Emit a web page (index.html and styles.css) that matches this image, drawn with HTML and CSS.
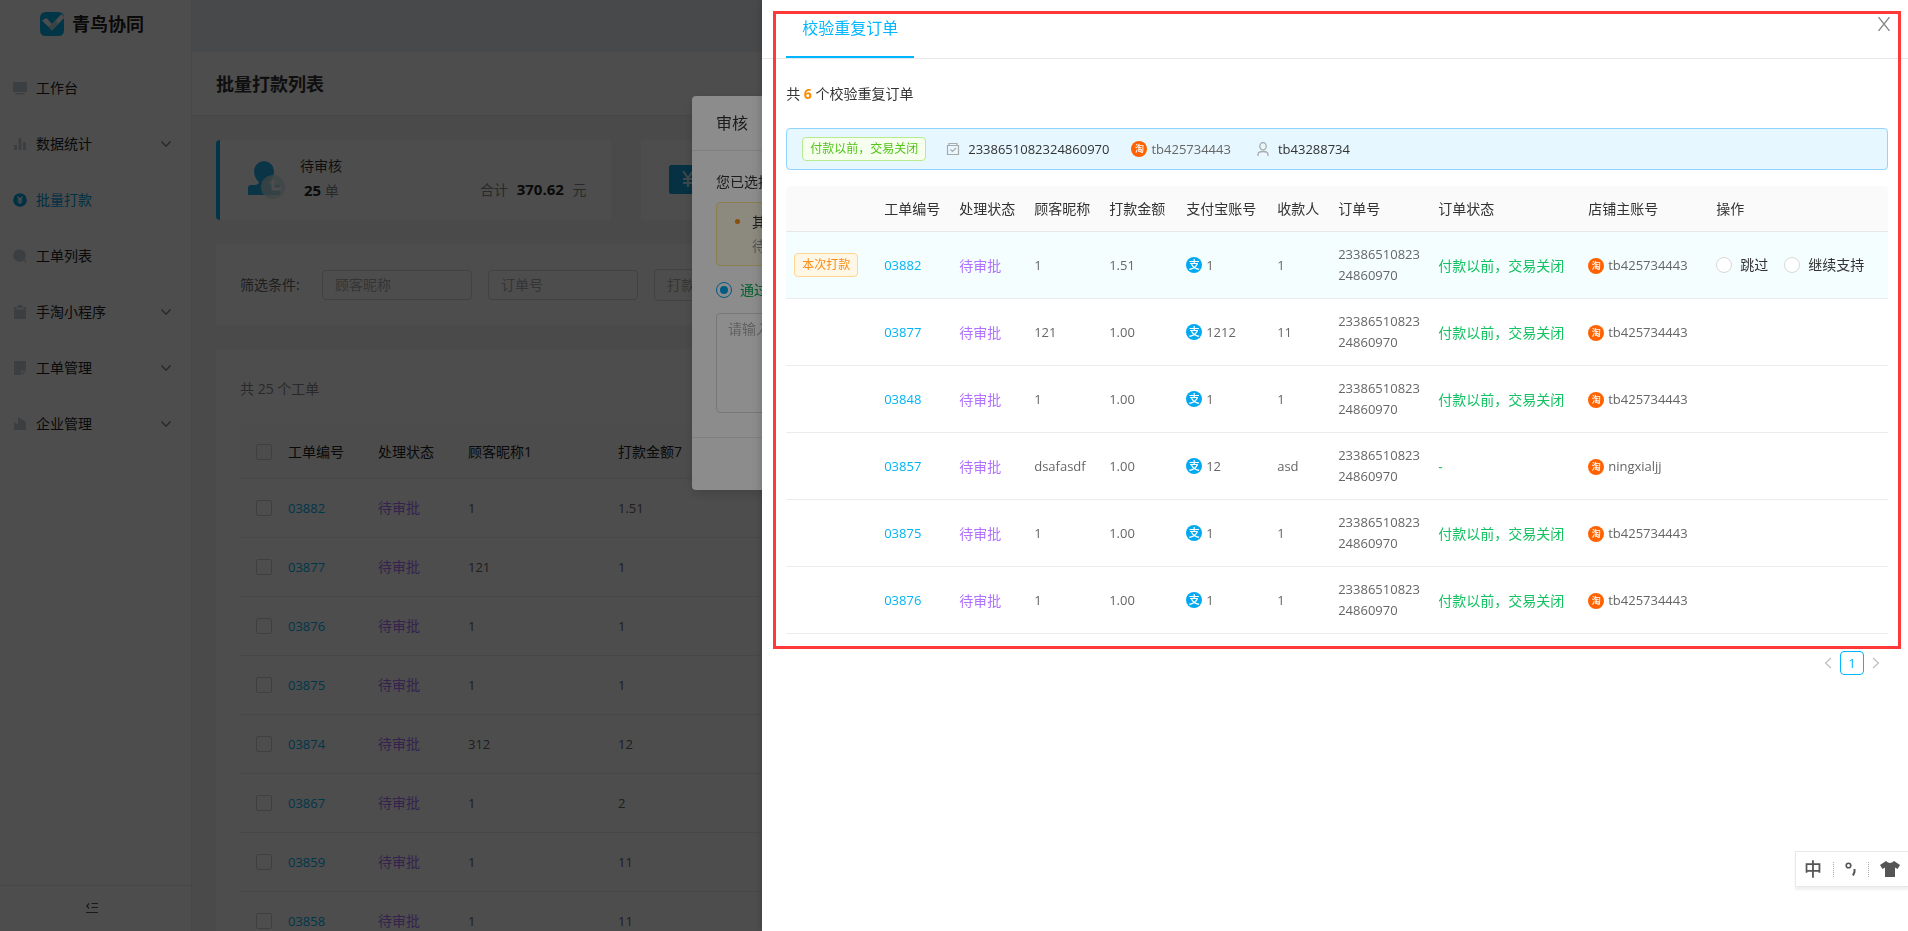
FILE: index.html
```html
<!DOCTYPE html>
<html lang="zh-CN">
<head>
<meta charset="utf-8">
<meta name="viewport" content="width=device-width, initial-scale=1">
<title>青鸟协同</title>
<link rel="stylesheet" href="styles.css">
</head>
<body>
<svg class="sprite" aria-hidden="true">
  <symbol id="chevron" viewBox="0 0 12 12"><path d="M1.5 3.5 6 8.200l4.500-4.700" fill="none" stroke="currentColor" stroke-width="1.500"/></symbol>
  <symbol id="order" viewBox="0 0 14 14"><path d="M1.500 3.500h11v9h-11zM3 1.500h8v2H3zM4.500 7.500l2 2 3.500-3.500" fill="none" stroke="currentColor" stroke-width="1.200"/></symbol>
  <symbol id="person" viewBox="0 0 14 14"><ellipse cx="7" cy="4.200" rx="3.200" ry="3.700" fill="none" stroke="currentColor" stroke-width="1.300"/><path d="M2 14V12.500Q2 9.500 7 9.500t5 3V14" fill="none" stroke="currentColor" stroke-width="1.300"/></symbol>
</svg>

<div class="app">
  <aside class="sidebar">
    <div class="brand">
      <svg class="brand-logo" viewBox="0 0 24 24" aria-hidden="true"><path d="M6 0h12q6 0 6 6v12q0 6-6 6H6q-6 0-6-6V6q0-6 6-6z" fill="#00b4ec"/><path d="M2 8.500 6.500 6l5.500 6L21.500 2l2.500 3v1L12 18.500z" fill="#fff"/><path d="M12 12l4-4 2 4-6 6.500-4-4z" fill="#b9dfe8"/></svg>
      <span>青鸟协同</span>
    </div>
    <nav class="menu">
      <a class="menu-item" href="#"><svg class="menu-icon" viewBox="0 0 14 14"><path d="M0 1h14v10H0zM2 12h10v1.500H2z"/></svg><span>工作台</span></a>
      <a class="menu-item" href="#"><svg class="menu-icon" viewBox="0 0 14 14"><path d="M1 8h3v5H1zM5.500 1h3v12h-3zM10 5h3v8h-3z"/></svg><span>数据统计</span><svg class="menu-arrow"><use href="#chevron"/></svg></a>
      <a class="menu-item active" href="#"><svg class="menu-icon" viewBox="0 0 14 14"><circle cx="7" cy="7" r="6.800"/><path d="M4.500 3.500 7 6.500l2.500-3M4.500 7h5M4.500 9h5M7 6.500V11" fill="none" stroke="#fff" stroke-width="1.200"/></svg><span>批量打款</span></a>
      <a class="menu-item" href="#"><svg class="menu-icon" viewBox="0 0 14 14"><circle cx="6.500" cy="6.500" r="6.300"/><path d="M10 10l3.500 3.500" stroke="currentColor" stroke-width="1.500"/></svg><span>工单列表</span></a>
      <a class="menu-item" href="#"><svg class="menu-icon" viewBox="0 0 14 14"><path d="M1 2h2.500v2.500h7V2H13v12H1zM4.500 0h5v3h-5z"/></svg><span>手淘小程序</span><svg class="menu-arrow"><use href="#chevron"/></svg></a>
      <a class="menu-item" href="#"><svg class="menu-icon" viewBox="0 0 14 14"><path d="M1 0h12v9.500H8.500V14H1zM9.500 10.500H13L9.500 14z"/></svg><span>工单管理</span><svg class="menu-arrow"><use href="#chevron"/></svg></a>
      <a class="menu-item" href="#"><svg class="menu-icon" viewBox="0 0 14 14"><path d="M1 5l4 2.500V0l8 5v8H1z"/></svg><span>企业管理</span><svg class="menu-arrow"><use href="#chevron"/></svg></a>
    </nav>
    <button class="collapse" type="button" aria-label="收起菜单"><svg viewBox="0 0 12 12"><path d="M3 1.500.8 4 3 6.500M5.500 1.500H12M5.500 5.500H12M0 10.500h12" fill="none" stroke="currentColor" stroke-width="1.200"/></svg></button>
  </aside>

  <div class="page">
    <div class="topbar"></div>
    <header class="page-head"><h1>批量打款列表</h1></header>
    <main class="content">
      <section class="stats">
        <div class="stat selected">
          <svg class="stat-icon" viewBox="0 0 38 38"><path d="M0 34V27q0-3 3-3h5q3-1 3-3Q6 17 6 10 7 1 16 0q9 1 10 10 0 7-5 11 0 2 3 3h8v10z" fill="#1eaee8"/><circle cx="25" cy="26" r="12" fill="#cfe6e8" fill-opacity=".8"/><path d="M25 19v9h8" fill="none" stroke="#fff" stroke-width="3"/></svg>
          <div class="stat-text"><span>待审核</span><span class="stat-count"><b>25</b> 单</span></div>
          <div class="stat-sum">合计 <b>370.62</b> 元</div>
        </div>
        <div class="stat">
          <svg class="stat-icon" viewBox="0 0 38 38"><rect x="0" y="4" width="38" height="29" rx="2" fill="#12a3dc"/><path d="M14 10l5 7 5-7M14 18h10M14 22h10M19 17v9" fill="none" stroke="#d3ecf3" stroke-width="2"/></svg>
        </div>
        <div class="stat"></div>
        <div class="stat"></div>
      </section>
      <form class="filters">
        <span class="filters-label">筛选条件:</span>
        <input class="field" type="text" placeholder="顾客昵称" aria-label="顾客昵称">
        <input class="field" type="text" placeholder="订单号" aria-label="订单号">
        <input class="field tall" type="text" placeholder="打款" aria-label="打款">
      </form>
      <section class="list">
        <p class="list-total">共 25 个工单</p>
        <table class="list-table">
          <thead><tr><th class="c-check"><input class="check" type="checkbox" aria-label="全选"></th><th class="c-id">工单编号</th><th class="c-id">处理状态</th><th class="c-wide">顾客昵称1</th><th>打款金额7</th></tr></thead>
          <tbody>
            <tr><td class="c-check"><input class="check" type="checkbox" aria-label="03882"></td><td><a href="#">03882</a></td><td class="pending">待审批</td><td>1</td><td>1.51</td></tr>
            <tr><td class="c-check"><input class="check" type="checkbox" aria-label="03877"></td><td><a href="#">03877</a></td><td class="pending">待审批</td><td>121</td><td>1</td></tr>
            <tr><td class="c-check"><input class="check" type="checkbox" aria-label="03876"></td><td><a href="#">03876</a></td><td class="pending">待审批</td><td>1</td><td>1</td></tr>
            <tr><td class="c-check"><input class="check" type="checkbox" aria-label="03875"></td><td><a href="#">03875</a></td><td class="pending">待审批</td><td>1</td><td>1</td></tr>
            <tr><td class="c-check"><input class="check" type="checkbox" aria-label="03874"></td><td><a href="#">03874</a></td><td class="pending">待审批</td><td>312</td><td>12</td></tr>
            <tr><td class="c-check"><input class="check" type="checkbox" aria-label="03867"></td><td><a href="#">03867</a></td><td class="pending">待审批</td><td>1</td><td>2</td></tr>
            <tr><td class="c-check"><input class="check" type="checkbox" aria-label="03859"></td><td><a href="#">03859</a></td><td class="pending">待审批</td><td>1</td><td>11</td></tr>
            <tr><td class="c-check"><input class="check" type="checkbox" aria-label="03858"></td><td><a href="#">03858</a></td><td class="pending">待审批</td><td>1</td><td>11</td></tr>
          </tbody>
        </table>
      </section>
    </main>
  </div>
</div>

<div class="mask"></div>
<div class="modal" role="dialog" aria-label="审核">
  <h2 class="modal-head">审核</h2>
  <div class="modal-body">
    <p class="modal-lead">您已选择</p>
    <div class="notice"><ul><li>其<br><span>待</span></li></ul></div>
    <label class="choice pass"><input class="radio" type="radio" checked>通过</label>
    <textarea class="remark" placeholder="请输入" aria-label="备注"></textarea>
  </div>
  <div class="modal-foot"></div>
</div>
<div class="mask"></div>

<section class="drawer" role="dialog" aria-label="校验重复订单">
  <div class="tabs"><button class="tab" type="button">校验重复订单</button></div>
  <button class="close" type="button" aria-label="关闭"><svg viewBox="0 0 14 14"><path d="M1.500 0 12.500 14M12.500 0 1.500 14" stroke="currentColor" stroke-width="1.300"/></svg></button>
  <div class="drawer-body">
    <p class="dup-total">共 <b>6</b> 个校验重复订单</p>
    <div class="summary">
      <span class="tag green">付款以前，交易关闭</span>
      <span class="meta order-no"><svg class="meta-icon"><use href="#order"/></svg>2338651082324860970</span>
      <span class="meta shop"><i class="coin taobao">淘</i>tb425734443</span>
      <span class="meta buyer"><svg class="meta-icon"><use href="#person"/></svg>tb43288734</span>
    </div>
    <table class="dup">
      <colgroup><col class="w-tag"><col class="w-id"><col class="w-id"><col class="w-id"><col class="w-amount"><col class="w-pay"><col class="w-name"><col class="w-no"><col class="w-state"><col class="w-shop"><col></colgroup>
      <thead><tr><th></th><th>工单编号</th><th>处理状态</th><th>顾客昵称</th><th>打款金额</th><th>支付宝账号</th><th>收款人</th><th>订单号</th><th>订单状态</th><th>店铺主账号</th><th>操作</th></tr></thead>
      <tbody>
        <tr class="current"><td><span class="tag orange">本次打款</span></td><td><a href="#">03882</a></td><td class="pending">待审批</td><td>1</td><td>1.51</td><td><span class="account"><i class="coin alipay">支</i>1</span></td><td>1</td><td class="no">2338651082324860970</td><td class="closed">付款以前，交易关闭</td><td><span class="account"><i class="coin taobao">淘</i>tb425734443</span></td><td><span class="choices"><label class="choice"><input class="radio" type="radio" name="act">跳过</label><label class="choice"><input class="radio" type="radio" name="act">继续支持</label></span></td></tr>
        <tr><td></td><td><a href="#">03877</a></td><td class="pending">待审批</td><td>121</td><td>1.00</td><td><span class="account"><i class="coin alipay">支</i>1212</span></td><td>11</td><td class="no">2338651082324860970</td><td class="closed">付款以前，交易关闭</td><td><span class="account"><i class="coin taobao">淘</i>tb425734443</span></td><td></td></tr>
        <tr><td></td><td><a href="#">03848</a></td><td class="pending">待审批</td><td>1</td><td>1.00</td><td><span class="account"><i class="coin alipay">支</i>1</span></td><td>1</td><td class="no">2338651082324860970</td><td class="closed">付款以前，交易关闭</td><td><span class="account"><i class="coin taobao">淘</i>tb425734443</span></td><td></td></tr>
        <tr><td></td><td><a href="#">03857</a></td><td class="pending">待审批</td><td>dsafasdf</td><td>1.00</td><td><span class="account"><i class="coin alipay">支</i>12</span></td><td>asd</td><td class="no">2338651082324860970</td><td class="closed">-</td><td><span class="account"><i class="coin taobao">淘</i>ningxialjj</span></td><td></td></tr>
        <tr><td></td><td><a href="#">03875</a></td><td class="pending">待审批</td><td>1</td><td>1.00</td><td><span class="account"><i class="coin alipay">支</i>1</span></td><td>1</td><td class="no">2338651082324860970</td><td class="closed">付款以前，交易关闭</td><td><span class="account"><i class="coin taobao">淘</i>tb425734443</span></td><td></td></tr>
        <tr><td></td><td><a href="#">03876</a></td><td class="pending">待审批</td><td>1</td><td>1.00</td><td><span class="account"><i class="coin alipay">支</i>1</span></td><td>1</td><td class="no">2338651082324860970</td><td class="closed">付款以前，交易关闭</td><td><span class="account"><i class="coin taobao">淘</i>tb425734443</span></td><td></td></tr>
      </tbody>
    </table>
    <nav class="pager" aria-label="分页">
      <button class="pager-arrow" type="button" aria-label="上一页"><svg viewBox="0 0 8 12"><path d="M7 1 1.500 6 7 11" fill="none" stroke="currentColor" stroke-width="1.200"/></svg></button>
      <button class="pager-page" type="button">1</button>
      <button class="pager-arrow" type="button" aria-label="下一页"><svg viewBox="0 0 8 12"><path d="M1 1l5.500 5L1 11" fill="none" stroke="currentColor" stroke-width="1.200"/></svg></button>
    </nav>
  </div>
  <div class="outline"></div>
</section>

<div class="ime">
  <span class="ime-lang">中</span>
  <span class="ime-sep"></span>
  <svg class="ime-punct" viewBox="0 0 12 16"><circle cx="3.500" cy="4.500" r="2.300" fill="none" stroke="#555" stroke-width="1.600"/><path d="M9.500 8v3L8 14.500" fill="none" stroke="#555" stroke-width="2"/></svg>
  <span class="ime-sep"></span>
  <svg class="ime-skin" viewBox="0 0 20 16"><path d="M6 0q4 4 8 0l6 4-2.500 4L15 6.500V16H5V6.500L2.500 8 0 4z" fill="#555"/></svg>
</div>
</body>
</html>
```

FILE: styles.css
```css
* { box-sizing: border-box; }

body {
  margin: 0;
  height: 100vh;
  overflow: hidden;
  font-family: "Open Sans", "Noto Sans CJK SC", sans-serif;
  font-size: 14px;
  line-height: 20px;
  color: #333;
  background: #f3f3f3;
}

h1, h2, p, ul { margin: 0; padding: 0; }
a { color: #00b4f5; text-decoration: none; }
button, input, textarea { font: inherit; }
button { border: 0; padding: 0; background: none; }
table { border-collapse: separate; border-spacing: 0; width: 100%; table-layout: fixed; }
th { font-weight: 400; text-align: left; }
.sprite { position: absolute; width: 0; height: 0; }

/* Shell */
.app { display: flex; height: 100vh; }
.sidebar {
  flex: 0 0 192px;
  display: flex;
  flex-direction: column;
  background: #fff;
  border-right: 1px solid #ebebeb;
}
.brand {
  display: flex;
  align-items: center;
  gap: 8px;
  height: 48px;
  padding-left: 40px;
  font-size: 18px;
  font-weight: 700;
  color: #222;
}
.brand-logo { width: 24px; height: 24px; }
.menu { flex: 1; padding-top: 12px; }
.menu-item {
  display: flex;
  align-items: center;
  gap: 9px;
  height: 56px;
  padding: 0 19px 0 13px;
  color: #222;
}
.menu-icon { width: 14px; height: 14px; color: #c5d0d9; fill: currentColor; }
.menu-arrow { width: 12px; height: 12px; margin-left: auto; color: #888; }
.menu-item.active, .menu-item.active .menu-icon { color: #00a0e0; }
.collapse {
  height: 46px;
  padding-right: 8px;
  border-top: 1px solid #e6e6e6;
  color: #555;
}
.collapse svg { width: 12px; height: 12px; }

.page { flex: 1; min-width: 0; display: flex; flex-direction: column; }
.topbar { flex: 0 0 52px; background: #edf1f7; }
.page-head {
  flex: 0 0 64px;
  display: flex;
  align-items: center;
  padding-left: 24px;
  background: #fff;
  border-bottom: 1px solid #e8e8e8;
}
.page-head h1 { font-size: 18px; }
.content { flex: 1; min-height: 0; display: flex; flex-direction: column; gap: 24px; padding: 24px 24px 0; }

.stats { display: grid; grid-template-columns: repeat(4, 1fr); gap: 30px; }
.stat {
  display: flex;
  align-items: center;
  gap: 14px;
  height: 80px;
  padding: 0 24px 0 28px;
  border-radius: 4px;
  background: #fff;
}
.stat.selected { border-left: 4px solid #00b4ec; }
.stat-icon { width: 38px; height: 38px; }
.stat-text { display: flex; flex-direction: column; gap: 4px; padding-bottom: 4px; }
.stat-count, .stat-sum { color: #888; }
.stat-count { padding-left: 4px; }
.stat-sum { margin: 18px 0 0 auto; }
.stat b { font-size: 15px; color: #222; }
.stat-sum b { margin: 0 5px; }

.filters {
  display: flex;
  align-items: center;
  gap: 16px;
  height: 81px;
  padding: 0 24px;
  background: #fff;
}
.filters-label { width: 66px; color: #666; }
.field {
  width: 150px;
  height: 30px;
  padding: 0 12px;
  border: 1px solid #d9d9d9;
  border-radius: 4px;
  background: #fff;
}
.field.tall { height: 32px; }
.field::placeholder, .remark::placeholder { color: #b0b0b0; }

.list { flex: 1; min-height: 0; overflow: hidden; padding: 30px 24px 0; background: #fff; }
.list-total { margin-bottom: 26px; color: #888; }
.list-table th { height: 54px; padding: 0; background: #fafafa; border-bottom: 1px solid #e8e8e8; color: #222; }
.list-table td { height: 59px; padding: 0; border-bottom: 1px solid #ececec; font-size: 13px; color: #666; }
.list-table .c-check { width: 48px; padding-left: 16px; }
.c-id { width: 90px; }
.c-wide { width: 150px; }
.check {
  appearance: none;
  display: block;
  width: 16px;
  height: 16px;
  margin: 0;
  border: 1px solid #d0d0d0;
  border-radius: 2px;
}
.list-table td.pending, .dup td.pending { font-size: 14px; color: #b072ff; }

/* Overlays */
.mask { position: fixed; inset: 0; background: rgba(0, 0, 0, .45); }
.modal {
  position: fixed;
  top: 96px;
  left: 50%;
  width: 524px;
  margin-left: -262px;
  border-radius: 4px;
  background: #fff;
  box-shadow: 0 4px 12px rgba(0, 0, 0, .15);
}
.modal-head { padding: 17px 24px; border-bottom: 1px solid #e8e8e8; font-size: 16px; font-weight: 400; line-height: 20px; }
.modal-body { padding: 21px 24px 24px; }
.modal-lead { margin-bottom: 10px; }
.notice { height: 64px; margin-bottom: 14px; padding: 7px 0 0 35px; border: 1px solid #ffe58f; border-radius: 4px; background: #fffbe6; line-height: 24px; }
.notice li::marker { color: #fa8c16; }
.notice span { color: #999; }
.choices { display: flex; gap: 16px; }
.choice { display: inline-flex; align-items: center; gap: 8px; font-size: 14px; line-height: 20px; color: #333; white-space: nowrap; }
.choice.pass { display: flex; margin-bottom: 13px; color: #00b050; }
.radio {
  appearance: none;
  display: grid;
  place-items: center;
  width: 16px;
  height: 16px;
  margin: 0;
  border: 1px solid #d9d9d9;
  border-radius: 50%;
  background: #fff;
}
.radio:checked { border-color: #00a6ed; }
.radio:checked::after { content: ""; width: 8px; height: 8px; border-radius: 50%; background: #00a6ed; }
.remark { display: block; width: 100%; height: 100px; padding: 5px 11px; border: 1px solid #d9d9d9; border-radius: 4px; resize: none; }
.modal-foot { height: 53px; border-top: 1px solid #e8e8e8; }

/* Drawer */
.drawer {
  position: fixed;
  top: 0;
  right: 0;
  bottom: 0;
  left: 40%;
  margin-left: -1px;
  background: #fff;
  box-shadow: -2px 0 8px rgba(0, 0, 0, .15);
}
.tabs { display: flex; height: 59px; padding-left: 24px; border-bottom: 1px solid #e8e8e8; }
.tab { padding: 0 16px; border-bottom: 2px solid #00b7ff; font-size: 16px; color: #00b7ff; }
.close { position: absolute; top: 17px; right: 17px; width: 14px; height: 14px; color: #888; }
.close svg { display: block; width: 14px; height: 14px; }
.drawer-body { padding: 25px 20px 0 24px; }
.dup-total { margin-bottom: 24px; }
.dup-total b { color: #ff8a00; }
.summary {
  display: flex;
  align-items: center;
  height: 42px;
  margin-bottom: 16px;
  padding: 0 15px;
  border: 1px solid #91d5ff;
  border-radius: 4px;
  background: #e6f7ff;
}
.tag {
  display: inline-block;
  height: 24px;
  padding: 0 7px;
  border: 1px solid;
  border-radius: 4px;
  font-size: 12px;
  line-height: 22px;
  white-space: nowrap;
}
.tag.green { border-color: #b7eb8f; background: #f6ffed; color: #52c41a; }
.tag.orange { border-color: #ffd591; background: #fff7e6; color: #fa8c16; }
.meta { display: inline-flex; align-items: center; gap: 8px; font-size: 13px; }
.meta-icon { width: 14px; height: 14px; color: #aaa; }
.meta.order-no { margin-left: 20px; }
.meta.shop { margin-left: 22px; gap: 4px; color: #666; }
.meta.buyer { margin-left: 25px; }
.coin {
  display: inline-flex;
  align-items: center;
  justify-content: center;
  width: 16px;
  height: 16px;
  border-radius: 50%;
  font-style: normal;
  font-weight: 500;
  line-height: 16px;
  color: #fff;
}
.coin.taobao { background: #ff6200; font-size: 9px; }
.coin.alipay { background: #02a9f1; font-size: 11px; }
.account { display: inline-flex; align-items: center; gap: 4px; }

.dup th { height: 46px; padding: 0 0 0 8px; background: #fafafa; border-bottom: 1px solid #e8e8e8; white-space: nowrap; }
.dup th:first-child { border-top-left-radius: 4px; }
.dup th:last-child { border-top-right-radius: 4px; }
.dup td { height: 67px; padding: 12px 8px; border-bottom: 1px solid #ececec; font-size: 13px; line-height: 21px; color: #666; white-space: nowrap; }
.dup .current td { background: #f5feff; }
.dup td.no { white-space: normal; word-break: break-all; }
.dup td.closed { font-size: 14px; color: #13c261; }
.w-tag { width: 90px; }
.w-id { width: 75px; }
.w-amount { width: 77px; }
.w-pay { width: 91px; }
.w-name { width: 61px; }
.w-no { width: 100px; }
.w-state { width: 150px; }
.w-shop { width: 128px; }

.pager { display: flex; justify-content: flex-end; align-items: center; gap: 8px; margin-top: 17px; padding-right: 8px; }
.pager-arrow { width: 8px; height: 12px; color: #bfbfbf; }
.pager-arrow svg { display: block; width: 8px; height: 12px; }
.pager-page { width: 24px; height: 24px; border: 1px solid #00b7ff; border-radius: 4px; font-size: 13px; color: #00b7ff; }

.outline { position: absolute; top: 11px; left: 11px; right: 7px; height: 638px; border: 3px solid #ff3838; pointer-events: none; }

/* Input method bar */
.ime {
  position: fixed;
  right: 0;
  bottom: 44px;
  display: flex;
  align-items: center;
  gap: 11px;
  height: 36px;
  padding: 0 8px;
  border: 1px solid #e8e8e8;
  border-right: 0;
  background: #fff;
  box-shadow: 0 3px 2px rgba(0, 0, 0, .06);
}
.ime-lang { width: 18px; font-size: 18px; font-weight: 500; color: #555; }
.ime-sep { height: 15px; border-left: 1px dotted #aaa; }
.ime-punct { width: 12px; height: 16px; }
.ime-skin { width: 20px; height: 16px; }
```
